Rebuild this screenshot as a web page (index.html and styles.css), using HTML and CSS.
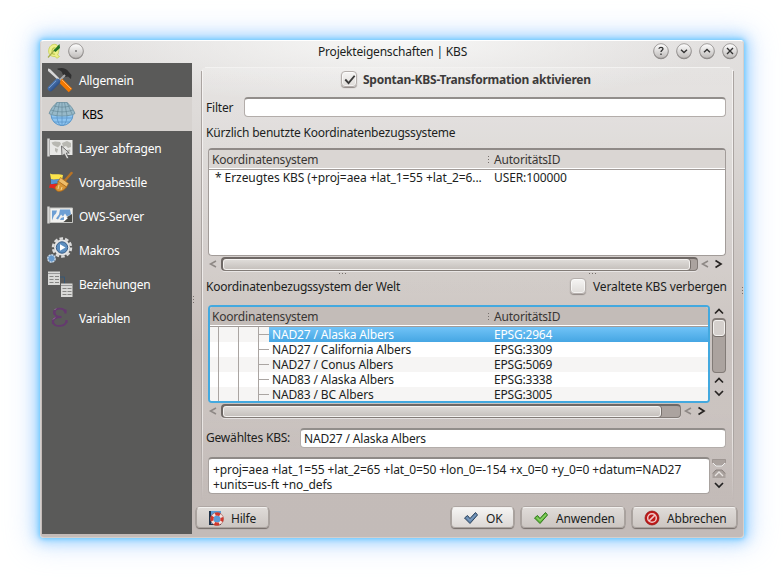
FILE: index.html
```html
<!DOCTYPE html>
<html lang="de">
<head>
<meta charset="utf-8">
<title>Projekteigenschaften | KBS</title>
<link rel="stylesheet" href="styles.css">
</head>
<body>
<svg width="0" height="0" class="defs">
  <defs>
    <linearGradient id="knob" x1="0" y1="0" x2="0" y2="1"><stop offset="0" stop-color="#fff"/><stop offset="1" stop-color="#bdbab8"/></linearGradient>
    <linearGradient id="bluehandle" x1="0" y1="0" x2="1" y2="1"><stop offset="0" stop-color="#5c8ac6"/><stop offset="1" stop-color="#1e3e74"/></linearGradient>
  </defs>
</svg>
<div class="window">
  <header class="titlebar">
    <svg class="qgis" viewBox="0 0 14 16"><path d="M9 1.500C5 .5 1.800 3.500 1.600 8c-.1 4 3.400 6 6.400 5.500l2 1.800 2.500-1.800-2-1.500C12.500 9 12.500 3 9 1.500z" fill="#eff08a" stroke="#c3cf50" stroke-width=".8"/><path d="M8.500 5C6 4.500 4.800 6.500 5 9.500c.4 1.500 1.500 2 3 1.500" fill="none" stroke="#b9c84c" stroke-width="1.200"/><path d="M1 14.500 8 6.500" stroke="#a3ad4c" stroke-width="1.200"/><path d="M6.500 7.500 12.500 1 13 5 8.500 9z" fill="#1f7424"/></svg>
    <svg class="knob" viewBox="0 0 18 18"><circle cx="9" cy="9.800" r="7.500" fill="#8b8886"/><circle cx="9" cy="9" r="7.300" fill="url(#knob)" stroke="#8f8c8a" stroke-width=".8"/><circle cx="9" cy="9" r=".8" fill="#333"/></svg>
    <h1 class="title"><span class="t-title">Projekteigenschaften | KBS</span></h1>
    <div class="controls">
      <svg class="knob" viewBox="0 0 18 18"><circle cx="9" cy="9.800" r="7.500" fill="#8b8886"/><circle cx="9" cy="9" r="7.300" fill="url(#knob)" stroke="#8f8c8a" stroke-width=".8"/><path d="M7 6.800C7 4.800 11 4.800 11 6.800 11 8.300 9 8.200 9 10M9 11.600v1.300" fill="none" stroke="#333" stroke-width="1.300"/></svg>
      <svg class="knob" viewBox="0 0 18 18"><circle cx="9" cy="9.800" r="7.500" fill="#8b8886"/><circle cx="9" cy="9" r="7.300" fill="url(#knob)" stroke="#8f8c8a" stroke-width=".8"/><path d="M6 7.800 9 10.500 12 7.800" fill="none" stroke="#333" stroke-width="1.400"/></svg>
      <svg class="knob" viewBox="0 0 18 18"><circle cx="9" cy="9.800" r="7.500" fill="#8b8886"/><circle cx="9" cy="9" r="7.300" fill="url(#knob)" stroke="#8f8c8a" stroke-width=".8"/><path d="M6 10.300 9 7.500 12 10.300" fill="none" stroke="#333" stroke-width="1.400"/></svg>
      <svg class="knob" viewBox="0 0 18 18"><circle cx="9" cy="9.800" r="7.500" fill="#8b8886"/><circle cx="9" cy="9" r="7.300" fill="url(#knob)" stroke="#8f8c8a" stroke-width=".8"/><path d="m6 6 6 6m0-6-6 6" fill="none" stroke="#333" stroke-width="1.400"/></svg>
    </div>
  </header>
  <div class="main">
    <nav class="sidebar">
      <a class="item"><svg viewBox="0 0 26 26"><path d="M1 1.500 3 2l9.500 9.500-1.500 1.500L1 4z" fill="#d8d8d8"/><path d="M10.500 1.500c5-1.500 9 0 11 3l3 3.500-.5 4-3-2.500-2.500.5-3-3c0-2-2-4-5-4.500z" fill="#303030"/><path d="M18 8 8 18" stroke="#a9a9a9" stroke-width="2"/><path d="m13.500 13.500 10 10" stroke="#f57900" stroke-width="5"/><path d="m15 13 9 9" stroke="#ffb066" stroke-width="1"/><path d="M10.500 14.500 3.500 21.500" stroke="url(#bluehandle)" stroke-width="5.500" stroke-linecap="round"/><path d="M9 14 2 21" stroke="#84a9d8" stroke-width=".8"/></svg><span>Allgemein</span></a>
      <a class="item active"><svg viewBox="0 0 28 26"><circle cx="14" cy="13.500" r="11" fill="#8cc4f0" stroke="#5c96c8"/><path d="M4 17h20M6 21h16M14 10v15M9 14c0 5 1 8 4 11M19 14c0 5-1 8-4 11" fill="none" stroke="#5c96c8" stroke-width=".8"/><path d="M9 1.500h10c3.500 3 6 6 8 11-3 1.800-8 2.500-13 2.500s-10-.7-13-2.500c2-5 4.500-8 8-11z" fill="#97b9c9" stroke="#6b8f9e" stroke-width=".8"/><path d="M6 5c5 1.500 11 1.500 16 0M3 9c7 2.500 15 2.500 22 0M11.500 1.500 9 14.500M14 1.500v13M16.500 1.500l2.500 13M9 1.500 4 13M19 1.500l5 11.500" fill="none" stroke="#618494" stroke-width=".6"/></svg><span>KBS</span></a>
      <a class="item"><svg viewBox="0 0 26 26"><path d="M3 5h22.500v15H3z" fill="#e8e8e6"/><path d="M1.500 3.500v18" stroke="#d6d6d4" stroke-width="2.400"/><path d="M4.500 7.500 8 6.500l5 .5 1 2-3 3.500-2-1-3-1.500zM15 8l5-2 4 2v4l-3 1-2-2-3 1zM8 13l3 1-1 4-2-2zM15 13l3 0-1 4-2-1zM20 15l3-.5.500 2-3 .5z" fill="#b8b8b2"/><path d="m14.500 11 .5 10 2.300-2 2.500 5 2-1-2.500-5h3z" fill="#d8d8d6" stroke="#555" stroke-width=".8"/></svg><span>Layer abfragen</span></a>
      <a class="item"><svg viewBox="0 0 26 26"><path d="M3 4.500c5 2 8-.5 13 1.500l-1 5c-4-2-8 1-11-1z" fill="#fbe34b"/><path d="M4 10c3 2 6-1 11 1l-3 4c-4-2-6 1-8 0z" fill="#5893d4"/><path d="M3 15c3 1 7-1 9 1l-1 5c-3 0-5-3-9-2z" fill="#e52620"/><path d="M24.500 4 18 11.500" stroke="#b87325" stroke-width="2.500" stroke-linecap="round"/><path d="m13.500 8.500 8 6-2 3.500-8.500-5z" fill="#efbd69" stroke="#aa6818" stroke-width=".7"/><path d="m11 12 8.500 6c-2 3-5 4.500-7.500 4.500-2 0-4-2-4-4.500 2-1 3-3 3-6z" fill="#d99737" stroke="#a96316" stroke-width=".7"/><path d="m12 16-1 4m4-2-1 3" stroke="#fae1a2" stroke-width=".8"/></svg><span>Vorgabestile</span></a>
      <a class="item"><svg viewBox="0 0 26 26"><path d="M3 5h22.500v14.500H3z" fill="#f1f1ef" stroke="#c5c5c2"/><path d="M1.500 3.500v17" stroke="#d6d6d4" stroke-width="2.400"/><path d="M5 7.500h5l-1 3-2 2-2 5zM13 6.500h10l1 5-4 2-2-3-2 3-2-2-3 5-2-1 3-4zM14 15l3-1 0 3h-4z" fill="#6d9fd4"/><path d="m16.500 19 2-4 6.500-4v8z" fill="#484844"/><path d="m16.500 19 1-6 3.500 2z" fill="#fff"/></svg><span>OWS-Server</span></a>
      <a class="item"><svg viewBox="0 0 26 26"><circle cx="15" cy="10.500" r="9" fill="none" stroke="#dcdcdc" stroke-width="2.500" stroke-dasharray="3.600 2.055"/><circle cx="15" cy="10.500" r="8" fill="#e6e6e6"/><circle cx="15" cy="10.500" r="5.700" fill="#5c8ebf" stroke="#395e88"/><path d="m13 7.300 5.500 3.200-5.500 3.200z" fill="#fff"/><circle cx="4.500" cy="21.500" r="3.700" fill="#6699cc" stroke="#c7d6e5" stroke-width="1.500" stroke-dasharray="2 .8"/></svg><span>Makros</span></a>
      <a class="item"><svg viewBox="0 0 26 26"><path d="M13 6h4.500v7" fill="none" stroke="#365775"/><path d="M1 .5h12V14H1zM14 12.500h11.500V26H14z" fill="#d9d9d7"/><path d="M1 2.500h12M14 14.500h11.500" stroke="#999" stroke-width="1"/><path d="M2.500 5.500h4m1.500 0h4M2.500 8.500h4m1.500 0h4M2.500 11.500h4m1.500 0h4M15.500 17.500h4m1 0h4M15.500 20.500h4m1 0h4M15.500 23.500h4m1 0h4" stroke="#858583" stroke-width="1"/></svg><span>Beziehungen</span></a>
      <a class="item"><svg viewBox="0 0 26 26"><path d="M18 7C17 2.300 8 2.500 7.500 7.500 7.500 11 10.500 12 14.500 12 9 12 6 13 6 16.500c0 6.300 12 5.500 13.500 0" fill="none" stroke="#65396f" stroke-width="1.800"/><path d="M7.200 5.500v4M6 14.500v4.500M18.500 4.500v4M19.500 15v3" stroke="#65396f" stroke-width="2.200"/><path d="M7.500 5 9 3.500M6 14.500l2-2" stroke="#9b78a3" stroke-width="1"/></svg><span>Variablen</span></a>
    </nav>
    <div class="grip side"></div>
    <div class="content">
      <section class="group">
        <label class="activate"><i class="check"><svg viewBox="0 0 16 16"><path d="m3.500 8 3.500 3.800L13.500 4" fill="none" stroke="#3a3a3a" stroke-width="2"/></svg></i><b>Spontan-KBS-Transformation aktivieren</b></label>
        <div class="filter"><span>Filter</span><div class="field"></div></div>
        <div class="caption"><span>Kürzlich benutzte Koordinatenbezugssysteme</span></div>
        <div class="table recent">
          <div class="thead"><span>Koordinatensystem</span><span class="second">AutoritätsID</span></div>
          <div class="trow"><span class="custom">* Erzeugtes KBS (+proj=aea +lat_1=55 +lat_2=6...</span><span class="second user">USER:100000</span></div>
        </div>
        <div class="hscroll"><svg class="arr dim" viewBox="0 0 8 8"><path d="M7 1 1.500 4l5.500 3"/></svg><div class="groove"><div class="handle"></div></div><svg class="arr dim" viewBox="0 0 8 8"><path d="M7 1 1.500 4l5.500 3"/></svg><svg class="arr" viewBox="0 0 8 8"><path d="m1.500 .5 5.500 3.500-5.500 3.500"/></svg></div>
        <div class="splitters"><i class="dots"></i><i class="dots"></i></div>
        <div class="world"><span>Koordinatenbezugssystem der Welt</span><label><i class="check"></i><span class="hide">Veraltete KBS verbergen</span></label></div>
        <div class="tree-area">
          <div class="table tree">
            <div class="thead"><span>Koordinatensystem</span><span class="second">AutoritätsID</span></div>
            <div class="node selected"><i class="lines"></i><span class="name">NAD27 / Alaska Albers</span><span class="code">EPSG:2964</span></div>
            <div class="node"><i class="lines"></i><span class="name">NAD27 / California Albers</span><span class="code">EPSG:3309</span></div>
            <div class="node alt"><i class="lines"></i><span class="name">NAD27 / Conus Albers</span><span class="code">EPSG:5069</span></div>
            <div class="node"><i class="lines"></i><span class="name">NAD83 / Alaska Albers</span><span class="code">EPSG:3338</span></div>
            <div class="node alt"><i class="lines"></i><span class="name">NAD83 / BC Albers</span><span class="code">EPSG:3005</span></div>
          </div>
          <div class="vscroll"><svg class="arr" viewBox="0 0 10 8"><path d="m1 6.500 4-4 4 4"/></svg><div class="vgroove"><div class="vhandle"></div></div><svg class="arr" viewBox="0 0 10 8"><path d="m1 6.500 4-4 4 4"/></svg><svg class="arr last" viewBox="0 0 10 8"><path d="m1 2 4 4 4-4"/></svg></div>
        </div>
        <div class="hscroll narrow"><svg class="arr dim" viewBox="0 0 8 8"><path d="M7 1 1.500 4l5.500 3"/></svg><div class="groove"><div class="handle"></div></div><svg class="arr dim" viewBox="0 0 8 8"><path d="M7 1 1.500 4l5.500 3"/></svg><svg class="arr" viewBox="0 0 8 8"><path d="m1.500 .5 5.500 3.500-5.500 3.500"/></svg></div>
        <div class="chosen"><span>Gewähltes KBS:</span><div class="field">NAD27 / Alaska Albers</div></div>
        <div class="proj"><div class="area"><div class="params">+proj=aea +lat_1=55 +lat_2=65 +lat_0=50 +lon_0=-154 +x_0=0 +y_0=0 +datum=NAD27<br>+units=us-ft +no_defs</div></div>
          <svg class="mini" viewBox="0 0 14 36"><path d="M.5 2.500h13v3l-3 3h-7l-3-3z" fill="#aaa29e" stroke="#8d8581" stroke-width=".6"/><path d="m1 6 3 3h6l3-3" fill="none" stroke="#eee"/><path d="M.5 21v-5l3-3h7l3 3v5z" fill="#aaa29e"/><path d="m1 16.500 3-3.500h6l3 3.500" fill="none" stroke="#8a827e"/><path d="m3 19 4-4 4 4" fill="none" stroke="#e8e4e2" stroke-width="1.300"/><path d="m3 26 4 4 4-4" fill="none" stroke="#222" stroke-width="1.700"/></svg></div>
      </section>
      <footer class="buttons">
        <button class="help"><svg viewBox="0 0 16 16"><path d="M1 1h12v14H1z" fill="#203248"/><path d="M3 1h10v13H3z" fill="#5a9bd5"/><circle cx="9" cy="9" r="5" fill="#5a9bd5" stroke="#f3e4e0" stroke-width="3"/><circle cx="9" cy="9" r="5" fill="none" stroke="#d5372c" stroke-width="3" stroke-dasharray="4.800 3.054" stroke-dashoffset="2.400"/><circle cx="9" cy="9" r="6.500" fill="none" stroke="#9c342e" stroke-width=".5"/></svg><span>Hilfe</span></button>
        <button class="ok"><svg viewBox="0 0 16 16"><path d="m1.500 8 3-2.500 2.500 3 5.500-6 2 2.500L7 13.500z" fill="#6386ad" stroke="#2c435c" stroke-linejoin="round"/><path d="m4 7.500 3 3 6-6" fill="none" stroke="#88a8ca"/></svg><span>OK</span></button>
        <button class="apply"><svg viewBox="0 0 16 16"><path d="m1.500 8 3-2.500 2.500 3 5.500-6 2 2.500L7 13.500z" fill="#65bd3f" stroke="#2c7519" stroke-linejoin="round"/><path d="m4 7.500 3 3 6-6" fill="none" stroke="#a4e083"/></svg><span>Anwenden</span></button>
        <button class="cancel"><svg viewBox="0 0 16 16"><circle cx="8" cy="8" r="7" fill="#bf1818" stroke="#8d1010" stroke-width=".7"/><circle cx="8" cy="8" r="4.300" fill="none" stroke="#f0c8c8" stroke-width="1.500"/><path d="m5 11 6-6" stroke="#f0c8c8" stroke-width="1.700"/></svg><span>Abbrechen</span></button>
      </footer>
    </div>
    <div class="grip edge"></div>
  </div>
</div>
</body>
</html>
```
FILE: styles.css
```css
* { box-sizing: border-box; }
body { margin: 0; padding: 40px; height: 578px; background: #fff; overflow: hidden; font: 12px/15px "Noto Sans", "Open Sans", sans-serif; letter-spacing: -.2px; color: #201e1d; white-space: nowrap; }
.defs { position: absolute; }
svg { display: block; flex: none; }
span, b { flex: none; }
.window { width: 704px; height: 498px; border: 1px solid #d4cfcd; border-top-color: #fff; border-radius: 4px; background: radial-gradient(ellipse 330px 65px at 50% 0, #f7f7f6, rgba(240,239,238,0)), linear-gradient(#e2e0df, #dedbd9 70px, #c4bcb8 300px, #c3bbb8); box-shadow: 0 0 4px 1px #6ccaff, 0 0 13px 4px rgba(105,190,255,.6), 0 0 28px 8px rgba(170,205,255,.42); }
.titlebar { height: 22px; display: flex; align-items: center; padding: 0 4.5px 2px 6px; }
.qgis { width: 14px; height: 16px; }
.knob { width: 18px; height: 18px; }
.titlebar > .knob { margin-left: 6px; }
.title { flex: 1; margin: 0; padding-left: 233px; font: inherit; }
.controls { display: flex; gap: 5px; }
.main { display: flex; height: 474px; }
.sidebar { width: 150px; height: 471px; margin-left: 1px; background: #5a5a59; }
.item { height: 34px; display: flex; align-items: center; gap: 6px; padding-left: 4px; color: #fff; }
.item svg { width: 26px; height: 26px; margin-left: 1px; }
.item.active { background: #d6d2cf; color: #000; }
.item.active svg { width: 28px; margin-left: 2px; }
.grip { width: 3px; height: 8px; background: radial-gradient(circle, #77706d 0 .8px, transparent 1px) 0 0/3px 3px; }
.grip.side { margin-top: 232px; width: 4px; }
.grip.edge { position: absolute; left: 741px; top: 286px; }
.content { width: 542px; }
.group { width: 533px; height: 433px; margin: 4px 4px 0 5px; padding: 0 7px 0 4px; border: 1px solid transparent; border-bottom: 0; border-radius: 5px 5px 0 0; background: linear-gradient(#aaa4a1, #aaa4a1 85%, transparent) 0 4px/1px 429px no-repeat border-box, linear-gradient(#f5f3f2, #e9e5e3 85%, transparent) 1px 3px/1px 429px no-repeat border-box, linear-gradient(#aaa4a1, #aaa4a1 85%, transparent) 100% 4px/1px 429px no-repeat border-box, linear-gradient(#f5f3f2, #e9e5e3 85%, transparent) 531px 3px/1px 429px no-repeat border-box, linear-gradient(#f3f2f1, #f3f2f1) 4px 0/525px 1px no-repeat border-box, linear-gradient(rgba(255,255,255,.16), rgba(255,255,255,.12) 80%, transparent); }
.check { display: block; flex: none; width: 16px; height: 16px; border: 1px solid #b5afac; border-radius: 4px; background: linear-gradient(#f6f5f4, #dfdcd9); box-shadow: inset 0 0 0 1px rgba(255,255,255,.6), 0 1px 1px #8f8885; }
.check svg { width: 15px; height: 15px; }
.activate { height: 27px; padding: 0 0 5px 135px; display: flex; align-items: center; gap: 6px; color: #3d3b3a; letter-spacing: -.24px; }
.filter { display: flex; height: 24px; align-items: center; }
.field { height: 20px; background: #fff; border: 1px solid #b3adaa; border-top: 2px solid #928e8b; border-radius: 4px; }
.filter .field { width: 482px; margin-left: auto; }
.caption { height: 29px; padding-top: 6px; }
.table { background: #fff; border: 1px solid #a29c99; border-top: 2px solid #8f8a87; border-radius: 4px; overflow: hidden; margin-left: 2px; }
.recent { width: 518px; height: 108px; }
.thead { display: flex; align-items: center; height: 20px; padding-left: 3px; background: #dad6d3; border-bottom: 1px solid #a29c99; box-shadow: inset 0 -1px #fff; color: #393634; position: relative; }
.thead .second { position: absolute; left: 285px; }
.thead .second::before { content: ""; position: absolute; left: -6px; top: 4px; width: 1px; height: 8px; background: linear-gradient(#77706c 50%, transparent 0) 0 0/1px 3px repeat-y; }
.trow { position: relative; padding-left: 6px; height: 15px; }
.trow .second { position: absolute; left: 285px; }
.custom { letter-spacing: -.07px; }
.user { letter-spacing: -.1px; }
.hscroll { display: flex; align-items: center; width: 518px; height: 16px; margin-left: 2px; padding-left: 1px; }
.arr { width: 8px; height: 8px; fill: none; stroke: #272422; stroke-width: 1.700; overflow: visible; }
.arr.dim { stroke: #8e8885; stroke-width: 1.500; }
.groove { width: 477px; height: 14px; margin: 0 3px 0 4px; border: 1px solid #827b77; border-top: 2px solid #6e6865; border-left: 2px solid #6e6865; border-radius: 4px; background: #aba39f; box-shadow: 0 1px rgba(255,255,255,.5); }
.handle { width: 467px; height: 11px; border: 1px solid #f4f2f0; border-radius: 3px; background: linear-gradient(#dedbd8, #c6c1bd); box-shadow: 1px 0 #77706c; }
.groove + .arr { margin-right: 5px; }
.splitters { height: 5px; display: flex; padding-left: 132px; gap: 241px; }
.dots { width: 9px; height: 3px; background: radial-gradient(circle, #746e6a 0 .8px, transparent 1px) 0 0/3px 3px; }
.world { height: 28px; display: flex; justify-content: space-between; align-items: center; padding-bottom: 9px; margin-right: -2px; }
.world label { display: flex; gap: 7px; align-items: center; width: 158px; }
.world .check { margin-top: -2px; }
.hide { letter-spacing: -.13px; }
.tree-area { display: flex; height: 98px; }
.tree { width: 504px; height: 98px; border: 2px solid #43a9df; }
.tree .thead { background: #c3bcb8; padding-left: 2px; }
.tree .thead .second { left: 284px; }
.node { display: flex; height: 15px; position: relative; background: #fff; }
.node.alt { background: #f6f5f4; }
.lines { display: block; width: 59px; height: 15px; background: linear-gradient(#aaa5a2,#aaa5a2) 8px 0/1px 15px no-repeat, linear-gradient(#aaa5a2,#aaa5a2) 28px 0/1px 15px no-repeat, linear-gradient(#aaa5a2,#aaa5a2) 48px 0/1px 15px no-repeat, linear-gradient(#aaa5a2,#aaa5a2) 48px 7px/11px 1px no-repeat; }
.name { padding-left: 3px; letter-spacing: -.15px; }
.code { position: absolute; left: 284px; }
.selected { color: #fff; background: linear-gradient(90deg, #f6f5f4 59px, transparent 0), linear-gradient(#71c3f7, #45a6e3); }
.vscroll { width: 14px; margin-left: 2px; display: flex; flex-direction: column; align-items: center; padding-top: 2px; }
.vscroll .arr { width: 10px; }
.vgroove { width: 14px; height: 55px; margin: 3px 0; border: 1px solid #827b77; border-top-width: 2px; border-radius: 4px; background: #aba39f; }
.vhandle { width: 12px; height: 16px; border: 1px solid #f4f2f0; border-radius: 3px; background: #d5d0cd; box-shadow: 0 1px #77706c; }
.vscroll .last { margin-top: 5px; }
.narrow .groove { width: 460px; }
.narrow .handle { width: 438px; }
.chosen { display: flex; align-items: center; height: 37px; }
.chosen .field { width: 426px; margin-left: auto; padding-left: 3px; line-height: 18px; letter-spacing: -.15px; }
.proj { display: flex; margin-top: 1px; }
.area { width: 503px; height: 37px; margin-left: 2px; background: #fff; border: 1px solid #a8a29f; border-top: 2px solid #8f8a87; border-radius: 4px; padding: 3px 4px; }
.params { letter-spacing: -.1px; }
.mini { width: 14px; height: 36px; margin-left: 2px; }
.buttons { display: flex; padding-top: 7px; }
button { display: flex; align-items: center; height: 21px; font: inherit; letter-spacing: inherit; color: inherit; padding: 1px 0 0 11px; gap: 7px; border: 1px solid #aaa39f; border-top-color: #f3f1ef; border-radius: 4px; background: linear-gradient(#dfdbd8, #ccc6c2); box-shadow: 0 1px 1px #756d69, 0 0 0 .5px #9b9490; }
button svg { width: 16px; height: 16px; }
.help { width: 73px; margin-right: 182px; }
.ok { width: 63px; margin-right: 7px; background: linear-gradient(#f5f4f3, #dcd8d5); }
.apply { width: 104px; margin-right: 7px; }
.cancel { width: 105px; }
```
